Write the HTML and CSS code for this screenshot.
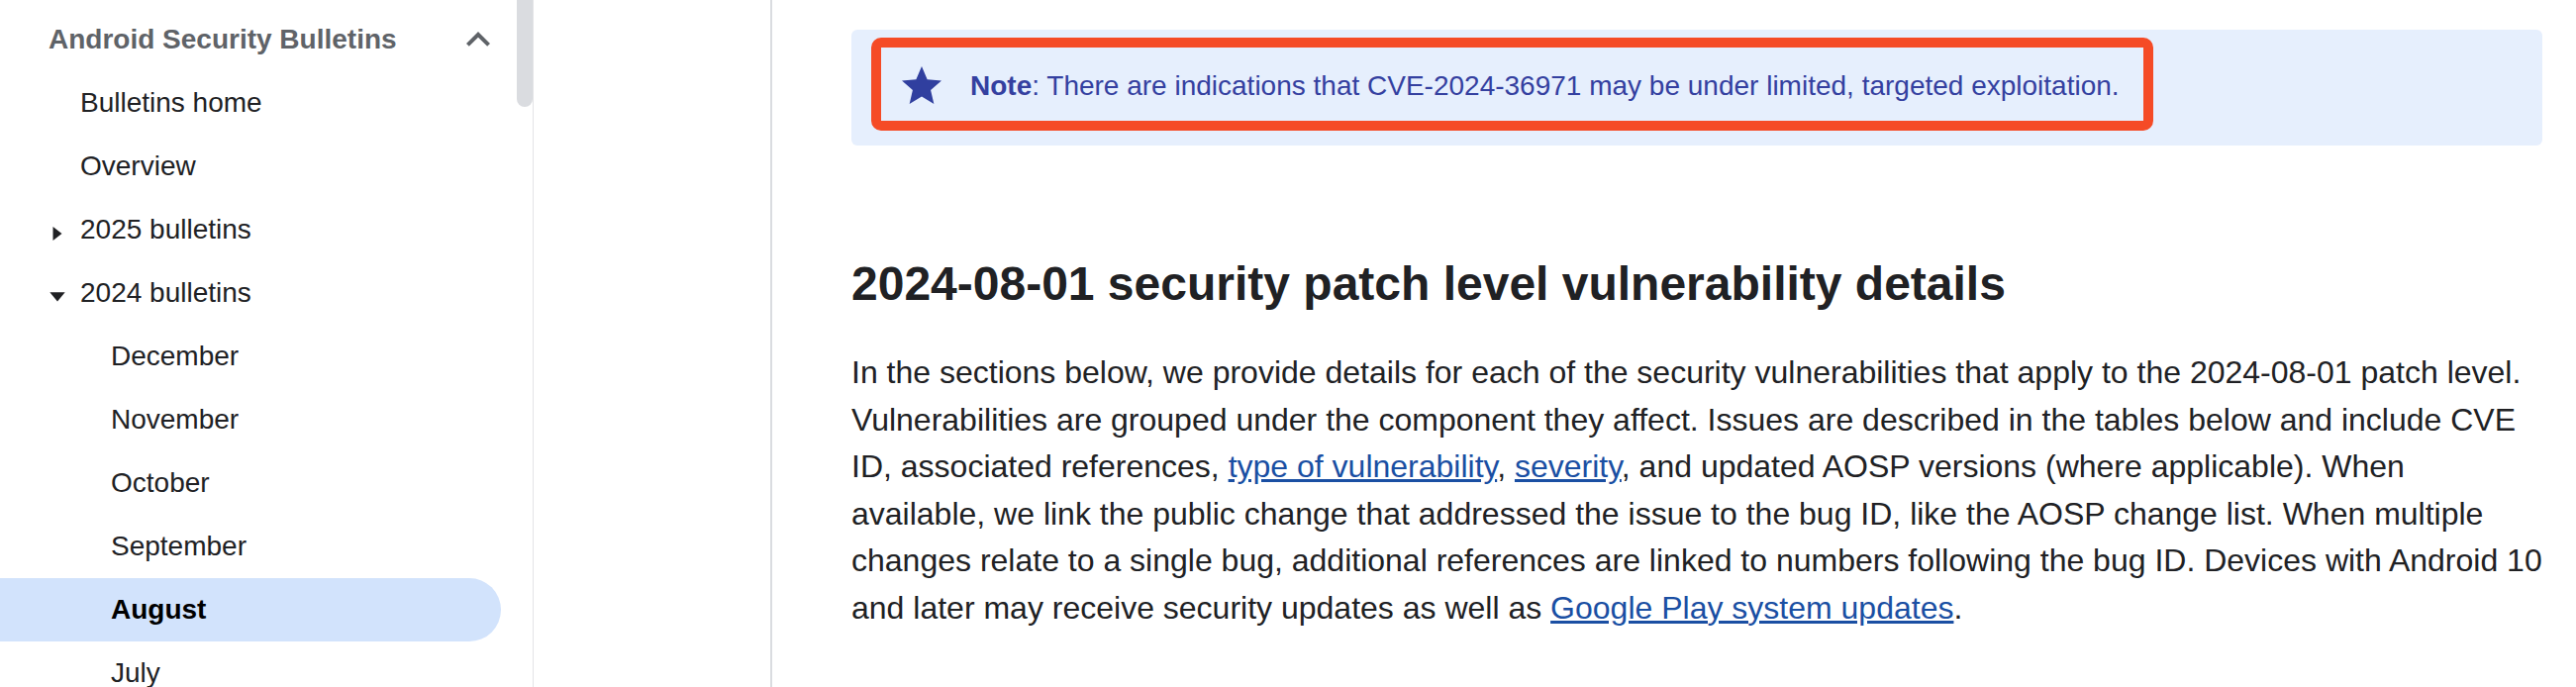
FILE: index.html
```html
<!DOCTYPE html>
<html lang="en">
<head>
<meta charset="utf-8">
<title>Android Security Bulletin—August 2024</title>
<link rel="stylesheet" href="styles.css">
</head>
<body>
<aside class="sidebar">
  <nav class="nav">
    <div class="nav-header">
      <span class="nav-title">Android Security Bulletins</span>
      <svg class="chevron" width="48" height="48" viewBox="0 0 24 24"><path d="M12 8l-6 6 1.41 1.41L12 10.83l4.59 4.58L18 14z" fill="#5f6368"/></svg>
    </div>
    <ul class="nav-list">
      <li class="item lvl1">Bulletins home</li>
      <li class="item lvl1">Overview</li>
      <li class="item lvl1 has-caret"><svg class="caret caret-right" width="18" height="18" viewBox="0 0 18 18"><polygon points="4.5,2 13.5,9 4.5,16" fill="#202124"/></svg>2025 bulletins</li>
      <li class="item lvl1 has-caret"><svg class="caret caret-down" width="18" height="18" viewBox="0 0 18 18"><polygon points="1.3,4.3 16.7,4.3 9,13.6" fill="#202124"/></svg>2024 bulletins</li>
      <li class="item lvl2">December</li>
      <li class="item lvl2">November</li>
      <li class="item lvl2">October</li>
      <li class="item lvl2">September</li>
      <li class="item lvl2 active">August</li>
      <li class="item lvl2">July</li>
    </ul>
  </nav>
  <div class="scrollbar"><div class="thumb"></div></div>
</aside>
<main class="main">
  <div class="note">
    <div class="note-mark">
      <svg class="star" width="48" height="48" viewBox="0 0 24 24"><path d="M12 17.27L18.18 21l-1.64-7.03L22 9.24l-7.19-.61L12 2 9.19 8.63 2 9.24l5.46 4.73L5.82 21z" fill="#303f9f"/></svg>
      <span class="note-text"><strong>Note</strong>: There are indications that CVE-2024-36971 may be under limited, targeted exploitation.</span>
    </div>
  </div>
  <h2 class="heading">2024-08-01 security patch level vulnerability details</h2>
  <p class="body-text">In the sections below, we provide details for each of the security vulnerabilities that apply to the 2024-08-01 patch level. Vulnerabilities are grouped under the component they affect. Issues are described in the tables below and include CVE ID, associated references, <a href="#">type of vulnerability</a>, <a href="#">severity</a>, and updated AOSP versions (where applicable). When available, we link the public change that addressed the issue to the bug ID, like the AOSP change list. When multiple changes relate to a single bug, additional references are linked to numbers following the bug ID. Devices with Android 10 and later may receive security updates as well as <a href="#">Google Play system updates</a>.</p>
</main>
</body>
</html>
```
FILE: styles.css
```css
html, body {
  margin: 0;
  padding: 0;
  background: #ffffff;
}
body {
  display: flex;
  width: 2602px;
  height: 694px;
  overflow: hidden;
  font-family: "Liberation Sans", Arial, sans-serif;
  color: #202124;
}
.sidebar {
  display: flex;
  width: 538px;
  flex: 0 0 538px;
  border-right: 1px solid #e3e4e6;
  height: 694px;
}
.nav {
  width: 522px;
  padding-top: 8px;
}
.nav-header {
  display: flex;
  align-items: center;
  justify-content: space-between;
  height: 64px;
  padding-left: 49px;
  padding-right: 15px;
}
.nav-title {
  font-size: 28px;
  font-weight: bold;
  color: #5f6368;
  line-height: 64px;
}
.chevron {
  display: block;
}
.nav-list {
  list-style: none;
  margin: 0 16px 0 0;
  padding: 0;
}
.item {
  display: flex;
  align-items: center;
  height: 64px;
  font-size: 28px;
  line-height: 64px;
  color: #202124;
  white-space: nowrap;
}
.lvl1 {
  padding-left: 81px;
}
.lvl1.has-caret {
  padding-left: 49px;
}
.lvl2 {
  padding-left: 112px;
}
.caret {
  display: block;
  flex: 0 0 18px;
  margin-right: 14px;
  margin-top: 8px;
}
.active {
  background: #d2e3fc;
  border-radius: 0 32px 32px 0;
  font-weight: bold;
  color: #000000;
}
.scrollbar {
  width: 16px;
  flex: 0 0 16px;
}
.thumb {
  width: 16px;
  height: 108px;
  background: #dadce0;
  border-radius: 0 0 8px 8px;
}
.main {
  flex: 0 0 auto;
  width: 1708px;
  margin-left: 239px;
  border-left: 2px solid #dadce0;
  padding: 30px 34px 0 80px;
}
.note {
  background: #e6effd;
  border-radius: 6px;
  padding: 8px 20px 15px;
}
.note-mark {
  display: inline-flex;
  align-items: center;
  border: 10px solid #f54b26;
  border-radius: 10px;
  padding: 15px 24px 11px 17px;
  color: #3440a0;
  font-size: 28px;
  line-height: 42px;
}
.star {
  display: block;
  flex: 0 0 48px;
  margin-right: 25px;
}
.note-text strong {
  font-weight: bold;
}
.heading {
  margin: 111px 0 0;
  font-size: 48px;
  line-height: 58px;
  font-weight: bold;
  color: #202124;
}
.body-text {
  margin: 37px 0 0;
  font-size: 32px;
  line-height: 47.5px;
  color: #202124;
}
.body-text a {
  color: #1a4fa3;
  text-decoration: underline;
}
```
